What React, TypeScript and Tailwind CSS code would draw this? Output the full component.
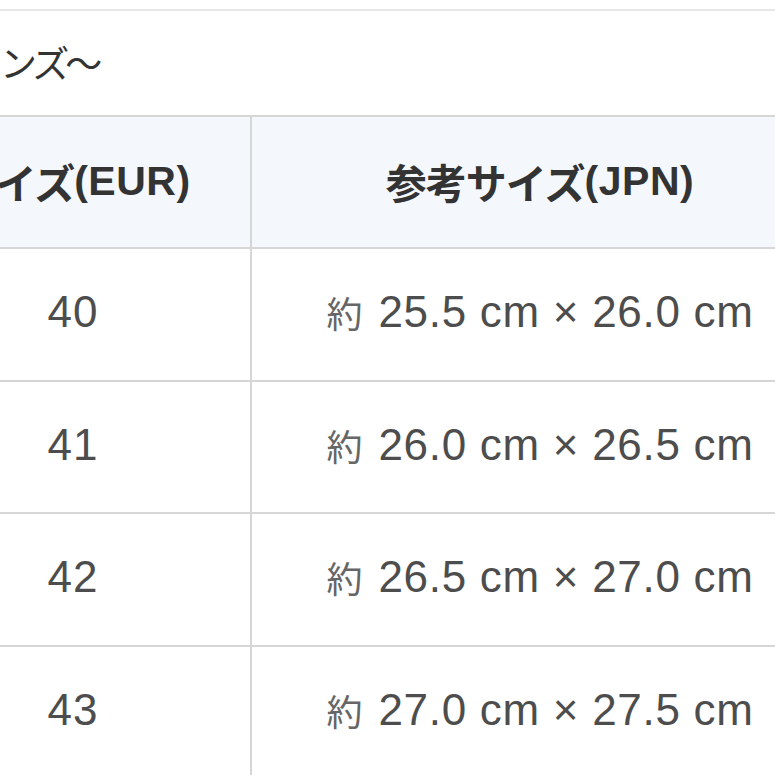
import React from "react";

const rows = [
  ["40", "25.5", "26.0"],
  ["41", "26.0", "26.5"],
  ["42", "26.5", "27.0"],
  ["43", "27.0", "27.5"],
];

export default function App() {
  return (
    <div
      className="w-[775px] h-[775px] overflow-hidden bg-white"
      style={{ fontFamily: '"Liberation Sans", "Noto Sans CJK JP", sans-serif' }}
    >
      <div className="h-[9px]" />
      <div className="border-t-2 border-[#e8e8e8]" />
      <div className="h-[104px] flex items-center">
        <div
          className="-ml-[66px] text-[37px] leading-none text-[#333] whitespace-nowrap pb-[2px] tracking-[-4px]"
          style={{ fontFamily: '"Noto Sans CJK JP", sans-serif' }}
        >
          〜メンズ〜
        </div>
      </div>
      <div className="-ml-[104px] w-[932px] border-t-2 border-[#d6d6d6]">
        <div className="grid grid-cols-[356px_576px] h-[132px] bg-[#f4f7fc] border-b-2 border-[#d6d6d6] font-bold text-[#333] text-[41px]">
          <div className="flex items-center justify-center border-r-2 border-[#d6d6d6] whitespace-nowrap">
            <span style={{ fontFamily: '"Noto Sans CJK JP", sans-serif' }} className="tracking-[-1px]">サイズ</span>
            <span className="tracking-[0.5px]">(EUR)</span>
          </div>
          <div className="flex items-center justify-center whitespace-nowrap">
            <span style={{ fontFamily: '"Noto Sans CJK JP", sans-serif' }} className="tracking-[-1px]">参考サイズ</span>
            <span className="tracking-[0.5px]">(JPN)</span>
          </div>
        </div>
        {rows.map(([eur, a, b]) => (
          <div
            key={eur}
            className="grid grid-cols-[356px_576px] h-[132.5px] border-b-2 border-[#d6d6d6] text-[#4d4d4d] text-[44px]"
          >
            <div className="flex items-center justify-center border-r-2 border-[#d6d6d6] tracking-[1px] pb-[4px]">
              {eur}
            </div>
            <div className="flex items-center justify-center whitespace-nowrap pb-[4px]">
              <span
                className="text-[36px] mr-[16px] text-[#666]"
                style={{ fontFamily: '"Noto Sans CJK JP", sans-serif' }}
              >
                約
              </span>
              <span className="tracking-[0.7px]">
                {a} cm × {b} cm
              </span>
            </div>
          </div>
        ))}
      </div>
    </div>
  );
}
